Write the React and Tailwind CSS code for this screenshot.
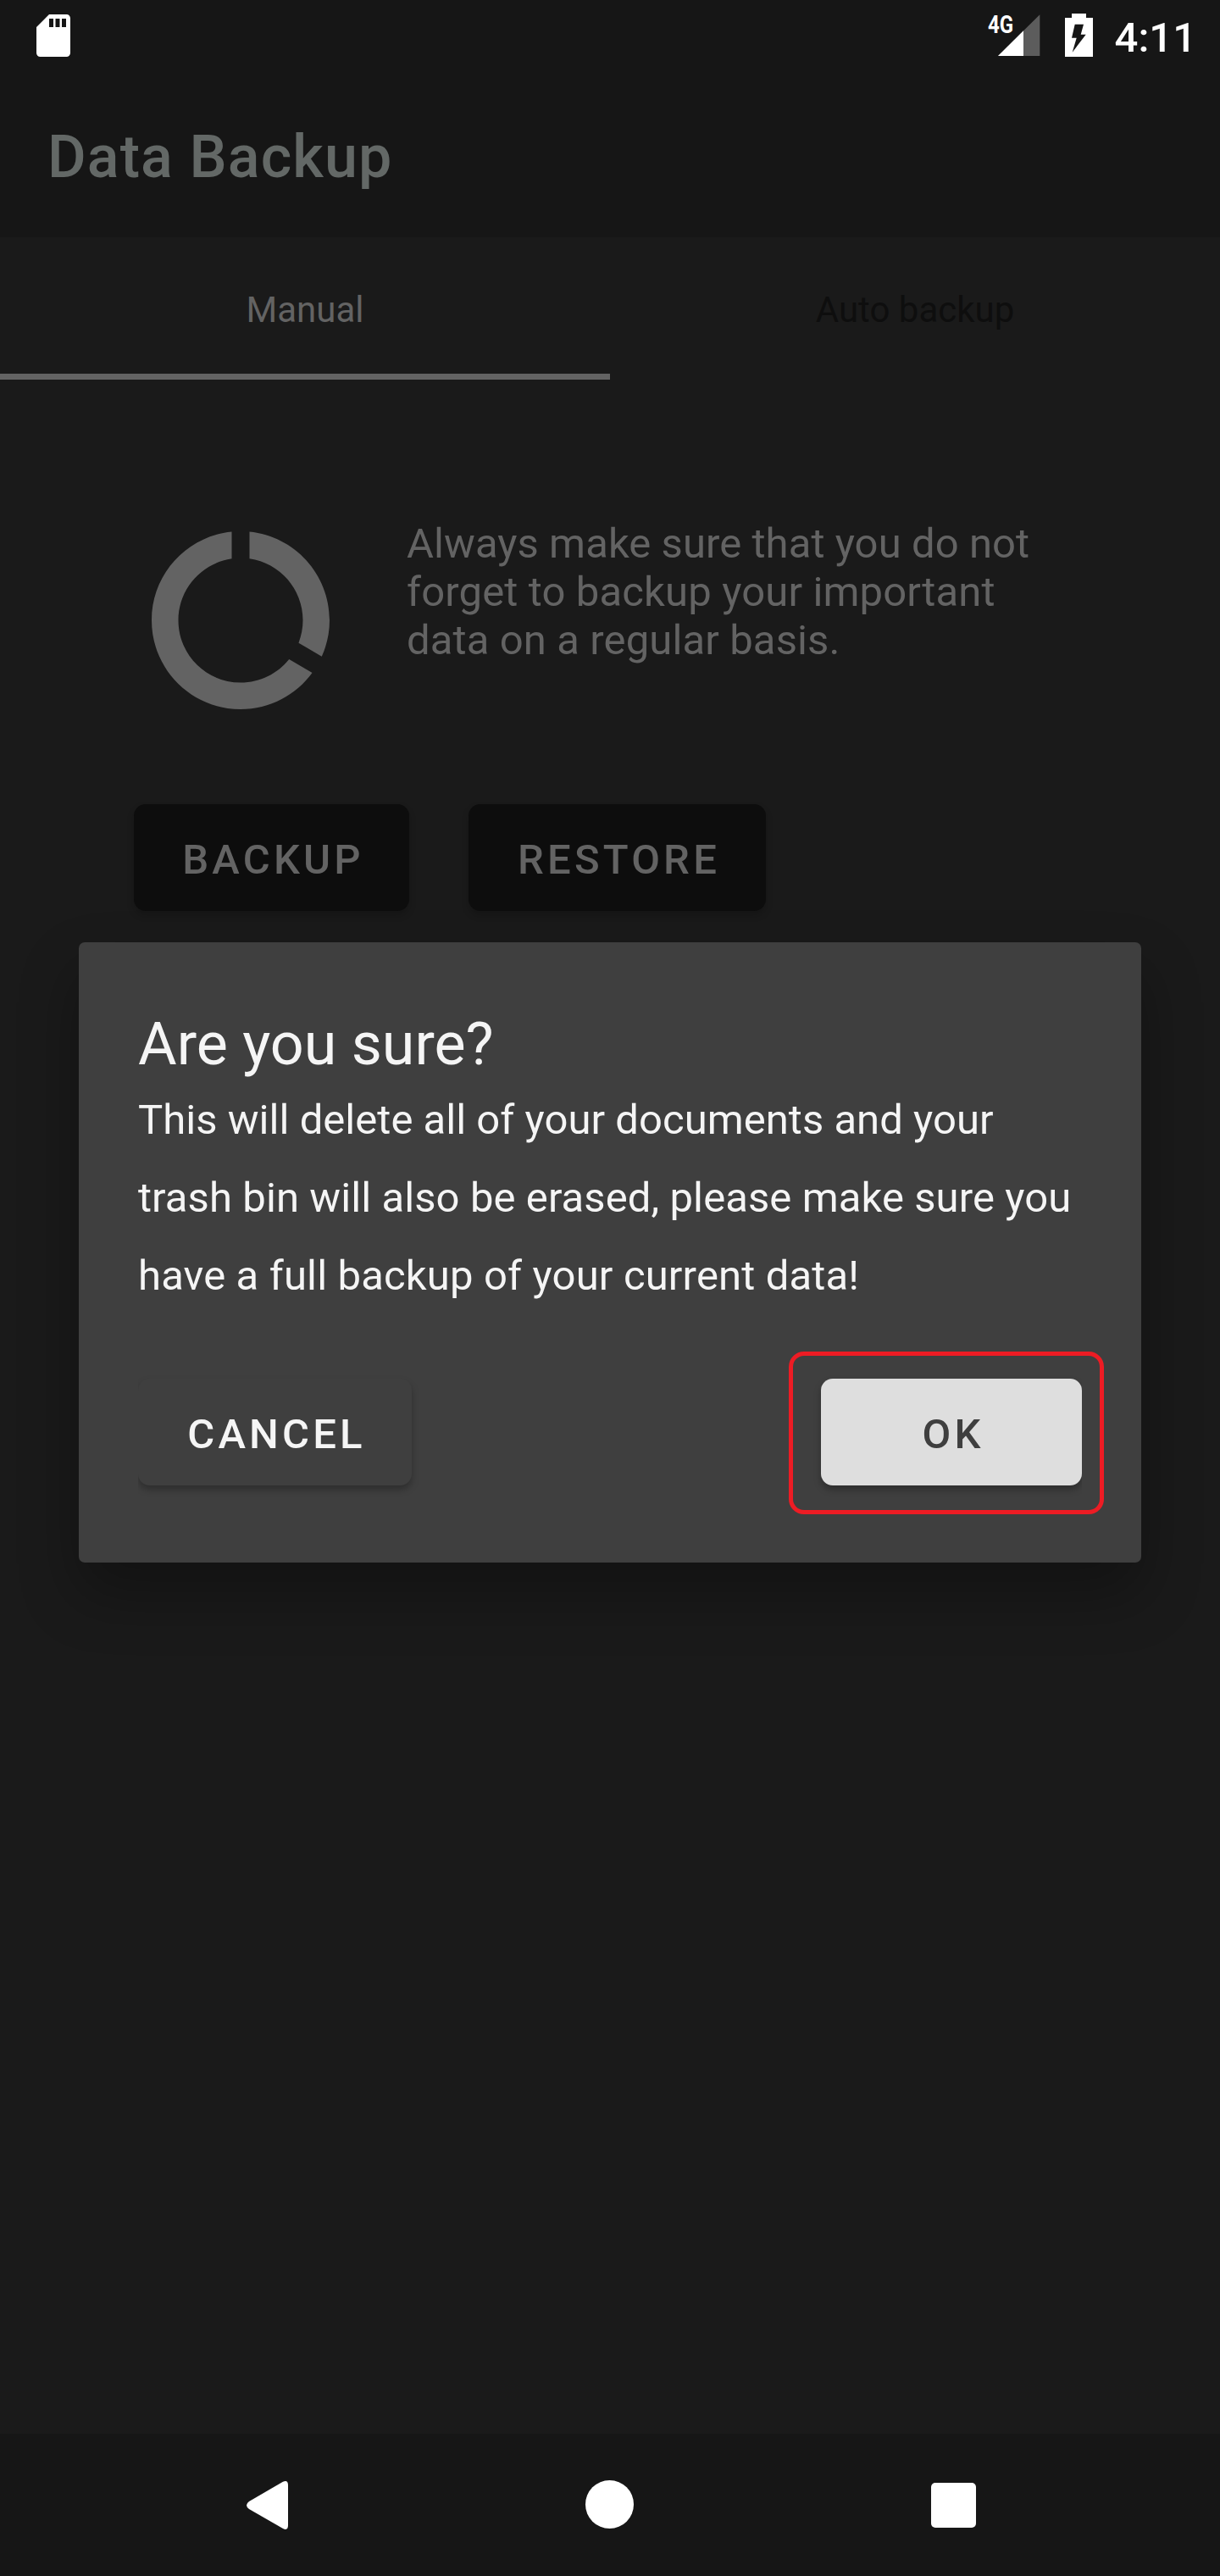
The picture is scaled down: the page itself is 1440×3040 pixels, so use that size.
function SdCardIcon() {
  return (
    <svg className="size-[60px]" viewBox="0 0 24 24" fill="#fff" fillRule="evenodd">
      <path d="M18.200 2H10L4 8v12.200c0 1 .800 1.800 1.800 1.800h12.400c1 0 1.800-.800 1.800-1.800V3.800c0-1-.800-1.800-1.800-1.800zM12 8h-2V4h2v4zm3 0h-2V4h2v4zm3 0h-2V4h2v4z" />
    </svg>
  );
}

function SignalIcon() {
  return (
    <svg className="h-[50px] w-[50px]" viewBox="0 0 50 50">
      <path d="M0 49H49.300V0.300z" fill="#5c5c5c" />
      <path d="M0 49H30V19.300z" fill="#fff" />
    </svg>
  );
}

function BatteryIcon() {
  return (
    <svg className="h-[51px] w-[33px]" viewBox="0 0 33 51">
      <path d="M8 0h17v5h8v46H0V5h8z" fill="#fff" />
      <path d="M11.700 12.700H22l-3.300 12h6L8.700 45.700l5-17H8z" fill="#161616" />
    </svg>
  );
}

function DataUsageIcon() {
  return (
    <svg className="size-[252px]" viewBox="0 0 24 24" fill="#636363">
      <path d="M13 2.050v3.030c3.390.490 6 3.390 6 6.920 0 .900-.180 1.750-.480 2.540l2.600 1.530c.560-1.240.880-2.620.880-4.070 0-5.180-3.950-9.450-9-9.950zM12 19c-3.870 0-7-3.130-7-7 0-3.530 2.610-6.430 6-6.920V2.050c-5.060.500-9 4.760-9 9.950 0 5.520 4.470 10 9.990 10 3.310 0 6.240-1.610 8.060-4.090l-2.600-1.530C16.170 17.980 14.210 19 12 19z" />
    </svg>
  );
}

function StatusBar() {
  return (
    <div className="flex h-[84px] justify-between bg-[#161616] pr-7 pl-[33px] text-white">
      <div className="pt-3">
        <SdCardIcon />
      </div>
      <div className="flex">
        <div className="h-[30px] w-[12px] pt-[14px]">
          <div className="origin-left scale-x-[0.8] text-[30px] leading-[30px] font-bold">4G</div>
        </div>
        <div className="pt-[17px]">
          <SignalIcon />
        </div>
        <div className="ml-[29.5px] pt-4">
          <BatteryIcon />
        </div>
        <div className="ml-[25.5px] pt-1 text-[49px] leading-[81px] font-medium">4:11</div>
      </div>
    </div>
  );
}

function Tab({ label, active }) {
  return (
    <div
      className={
        active
          ? "flex-1 border-b-[7px] border-[#636363] pt-1 text-center text-[#636363]"
          : "flex-1 border-b-[7px] border-transparent pt-1 text-center text-[#0e0e0e]"
      }
    >
      {label}
    </div>
  );
}

function DarkButton({ label, width }) {
  return (
    <button
      className={`${width} h-[126px] rounded-[14px] bg-[#0d0d0d] pt-[5px] pl-1 text-center text-[49px] leading-[121px] font-medium tracking-[4.2px] text-[#636363] shadow-[0_5px_8px_rgba(0,0,0,0.18)]`}
    >
      {label}
    </button>
  );
}

function Dialog() {
  return (
    <div className="absolute inset-x-0 top-[1112px] flex justify-center">
      <div className="h-[732px] w-[1254px] rounded-[7px] bg-[#3f3f3f] px-[70px] pt-[78px] text-[#f5f5f5] shadow-[0_36px_70px_rgba(0,0,0,0.3)]">
        <h2 className="mb-0.5 text-[70px] leading-[84px]">Are you sure?</h2>
        <p className="text-[49px] leading-[92px] whitespace-nowrap">
          <span className="block tracking-[0.035px]">This will delete all of your documents and your</span>
          <span className="block tracking-[0.09px]">trash bin will also be erased, please make sure you</span>
          <span className="block tracking-[0.155px]">have a full backup of your current data!</span>
        </p>
        <div className="mt-[75px] flex justify-between text-[49px] leading-[121px] font-medium tracking-[4.2px]">
          <div className="[clip-path:inset(-10px_-20px_-20px_0)]">
            <button className="block h-[126px] w-[323px] rounded-[14px] pt-[5px] pl-1 text-center shadow-[0_5px_8px_rgba(0,0,0,0.28)]">
              CANCEL
            </button>
          </div>
          <div className="relative">
            <div className="[clip-path:inset(-10px_0_-20px_-20px)]">
              <button className="block h-[126px] w-[308px] rounded-[14px] bg-[#dedede] pt-[5px] pl-1 text-center text-[#3f3f3f] shadow-[0_5px_8px_rgba(0,0,0,0.28)]">
                OK
              </button>
            </div>
            <div className="absolute -top-8 -left-[38px] h-48 w-[372px] rounded-[18px] border-[5px] border-[#ed1c24]" />
          </div>
        </div>
      </div>
    </div>
  );
}

function NavBar() {
  return (
    <div className="flex h-[168px] items-start justify-between bg-[#161616] pr-[288px] pl-[291px]">
      <svg className="mt-[56px] h-[57px] w-[49px]" viewBox="0 0 49 57" fill="#fff">
        <path d="M43 0.800Q49-2 49 5V52Q49 59 43 56L3 33Q-3 28.500 3 24z" />
      </svg>
      <div className="mt-[55px] size-[57px] rounded-full bg-white" />
      <div className="mt-[58px] size-[53px] rounded-[5px] bg-white" />
    </div>
  );
}

export default function App() {
  return (
    <div className="relative flex h-[3040px] w-[1440px] flex-col overflow-hidden bg-[#1a1a1a] font-['Roboto',sans-serif]">
      <StatusBar />
      <header className="h-[196px] bg-[#161616] px-14 pt-1.5">
        <h1 className="text-[70px] leading-[190px] font-medium tracking-[1.12px] text-[#636866]">Data Backup</h1>
      </header>
      <nav className="flex h-[168px] text-[42px] leading-[163px]">
        <Tab label="Manual" active />
        <Tab label="Auto backup" />
      </nav>
      <main className="flex-1 px-[158px] pt-[158px]">
        <section className="flex gap-[70px]">
          <DataUsageIcon />
          <p className="pt-[7px] text-[49px] leading-[57px] text-[#636363]">
            <span className="block tracking-[0.07px]">Always make sure that you do not</span>
            <span className="block tracking-[0.14px]">forget to backup your important</span>
            <span className="block tracking-[0.12px]">data on a regular basis.</span>
          </p>
        </section>
        <div className="mt-[91px] flex gap-[70px]">
          <DarkButton label="BACKUP" width="w-[325px]" />
          <DarkButton label="RESTORE" width="w-[351px]" />
        </div>
      </main>
      <NavBar />
      <Dialog />
    </div>
  );
}
